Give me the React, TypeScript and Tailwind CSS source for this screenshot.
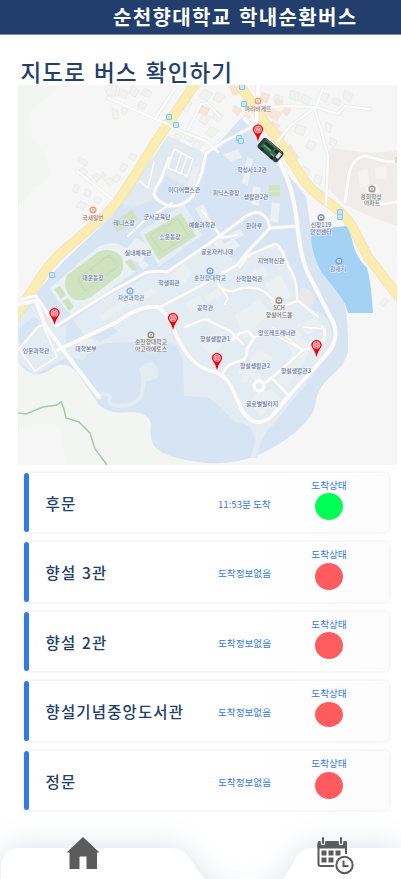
const font = "font-['Noto_Sans_CJK_KR',sans-serif]";

const stops = [
  { name: "후문", info: "11:53분 도착", arrived: true, dot: "mt-[1px] h-[27px]" },
  { name: "향설 3관", info: "도착정보없음", arrived: false, dot: "mt-[2px] h-[27px]" },
  { name: "향설 2관", info: "도착정보없음", arrived: false, dot: "mt-[1px] h-[27px]" },
  { name: "향설기념중앙도서관", info: "도착정보없음", arrived: false, dot: "mt-[2px] h-[25px]" },
  { name: "정문", info: "도착정보없음", arrived: false, dot: "mt-[2px] h-[27px]" },
];

const blocks = [
  "M104 88l5 -3l8 1l-1 10h-8z", "M112 108l6 3l0 8l-5 0z", "M120 88l8 4l-2 7l-8 -4z", "M133 85l6 6l-4 6l-6 -4z",
  "M145 88l7 4l-3 6l-8 -4z", "M140 101l7 4l-3 5l-7 -4z", "M123 107l5 3l-3 5l-4 -3z",
  "M79 157l9 5l-2 4l-9 -5z", "M78 171l5 -3l5 4l-4 6z", "M92 176l5 -3l5 4l-5 5z",
  "M102 172l5 3l-4 4z", "M104 180l6 -3l5 4l-5 6z", "M75 184l5 2l-3 7l-5 -2z", "M86 189l5 2l-2 6l-5 -2z", "M96 196l6 3l-3 5l-6 -3z",
  "M123 163l5 3l-4 6l-5 -3z", "M116 174l5 3l-4 6l-5 -3z", "M131 153l6 3l-3 5l-6 -3z", "M80 201l7 3l-4 5l-7 -2z",
  "M187 132l8 4l-4 7l-7 -5z", "M196 140l7 4l-4 7l-7 -5z", "M176 133l6 3l-3 5l-5 -3z", "M180 108l6 -9l6 4l-5 9z",
  "M205 89l8 5l-6 7l-8 -5z", "M217 92l8 4l-5 7l-7 -4z", "M203 113l8 4l-5 8l-7 -4z", "M217 111l6 4l-5 7l-6 -4z",
  "M211 126l8 5l-7 7l-7 -5z", "M291 90l9 3l-2 8l-9 -3z", "M275 94l8 3l-2 7l-8 -3z", "M303 94l8 4l-3 7l-8 -4z",
  "M297 124l9 4l-3 8l-9 -4z", "M322 92l7 3l-3 7l-6 -3z", "M334 97l7 4l-2 5l-7 -3z", "M345 90l8 4l-3 8l-7 -4z",
  "M303 166l7 4l-3 8l-7 -5z", "M309 140l7 3l-3 8l-7 -4z", "M316 174l6 3l-2 8l-6 -3z", "M326 122l6 3l-2 8l-5 -3z",
  "M331 137l6 4l-3 7l-5 -4z", "M317 188l6 3l-3 6l-6 -3z", "M380 303l5 -5l4 3l-6 6z",
];

const shops = [
  "M229 86l8 -1l3 8l-7 3z", "M262 92l8 3l-3 8l-7 -3z", "M269 107l13 6l-5 8l-11 -6z",
  "M272 121l8 4l-4 8l-8 -5z", "M279 130l7 4l-4 7l-7 -5z", "M290 144l9 14l-7 5l-9 -15z", "M276 98l7 3l-2 7l-6 -4z",
  "M235 105l7 5l-4 6l-6 -5z", "M202 105l8 4l-4 7l-8 -4z", "M285 106l6 3l-4 7l-5 -4z", "M246 112l5 4l-3 4l-5 -3z",
];

const buildings = [
  "M186 190l7 -22l6 -2l-5 27z", "M222 155l16 -6l4 9l-10 4z", "M247 157l6 2l-5 26l-6 -2z", "M253 186l8 2l-2 18l-8 -2z",
  "M272 202l8 2l-2 19l-8 -2z", "M126 249l10 -11l14 8l-9 18l-12 -6z",
  "M170 276l14 -12l8 8l-10 14l-9 -5z", "M138 264l6 -3l5 4l-6 5z",
  "M195 208l8 -4l6 12l-6 6z", "M100 316l22 -16l4 6l-22 16z", "M127 302l26 -14l3 5l-26 14z", "M235 315l24 -17l11 15l-26 27z",
  "M247 275l16 -9l5 9l-16 9z", "M265 284l15 -10l11 22l-18 13z", "M283 339l14 -9l9 12l-12 12z", "M200 344l20 -14l10 10l-20 15z",
  "M298 326l16 -9l9 7l-15 11z", "M237 370l9 -4l9 -14l5 -1l13 6l-3 5l-8 -2l-7 12l8 5l-4 5l-10 -6l-3 8l-6 -2l5 -10l-6 3z",
  "M285 365l8 -13l6 2l4 -12l7 2l-3 13l-20 30l-9 -5z", "M252 399l9 -10l6 3l5 -4l8 11l-4 12l-7 -3l-8 8l-7 -8z",
  "M221 246l12 -8l7 8l-14 9z", "M211 240l9 -3l7 12l-8 4z", "M228 234l12 -5l4 6l-12 6z",
  "M142 337l8 -5l9 9l-8 8z", "M76 342l14 -7l6 11l-14 7z", "M204 297l16 -10l4 6l-16 10z", "M185 304l14 -9l6 9l-14 9z",
];

const majorRoads = [
  "M12 321L38 282Q47 267 60 254L96 223Q105 216 112 208Q119 200 128 186L155 143L199 78",
  "M236 78L241 87L266 124L280 143L303 179Q313 193 333 206Q349 217 357 236L368 257L402 301",
];

const campusRoads = [
  { d: "M245 119L266 140Q284 166 291 190Q296 209 298 232Q302 265 312 281L333 322Q340 339 327 354L287 398L272 416Q256 430 243 412L233 390Q225 373 211 371Q191 366 177 337Q168 312 157 307Q140 305 117 322L58 350", w: 4 },
  { d: "M256 130L258 86", w: 4 },
  { d: "M250 128L225 141L206 153L202 172L193 196Q182 208 168 206L158 200Q151 195 157 186L161 179L169 158", w: 3 },
  { d: "M21 299L36 296L56 326L105 295L145 273Q155 270 167 272L210 243L240 221Q259 204 268 221L270 228L298 226", w: 3 },
  { d: "M270 228L250 249L237 265L202 285L160 307", w: 3 },
  { d: "M240 267L247 256L275 244Q281 244 288 266Q298 279 297 300L318 317", w: 2.5 },
  { d: "M218 284Q226 294 236 290Q252 284 265 292Q275 302 284 306L297 301", w: 2.5 },
  { d: "M218 284L228 298L225 304", w: 2 },
  { d: "M18 304L36 301L45 325L66 354L99 397", w: 4 },
  { d: "M38 327L19 349L35 371L57 357L43 325Z", w: 2 },
  { d: "M202 210L222 238L237 235", w: 2.5 },
  { d: "M223 373Q228 362 241 361Q248 358 247 349L254 338L248 331L240 333L232 340", w: 3 },
  { d: "M185 327L205 319L230 331L243 344", w: 2.5 },
  { d: "M254 337L272 333L302 350M273 327L303 350M303 327L325 329", w: 2 },
  { d: "M265 383L282 369L303 350L319 345Q329 338 322 326", w: 3 },
  { d: "M273 379L288 395", w: 3 },
  { d: "M164 122L180 131L206 141L218 152", w: 2.5 },
  { d: "M108 98L162 122M156 117L176 87", w: 2.5 },
  { d: "M77 171L112 199", w: 2.5 },
  { d: "M188 130L201 104L207 103L220 117", w: 2 },
  { d: "M258 110L282 106L316 107L323 88M316 107L338 114L345 106L370 109M316 107L290 126L278 141", w: 2.5 },
  { d: "M314 107L321 130L328 156L326 205", w: 2.5 },
  { d: "M345 202L349 174Q353 157 366 156L384 161L397 162M375 205L397 202", w: 3 },
  { d: "M140 181L148 188L152 171L154 162", w: 1.5 },
  { d: "M174 149L193 159L187 176L168 168ZM181 154L176 170M187 157L181 173", w: 1.5 },
  { d: "M128 236L143 222L172 203", w: 2 },
];

const labels = [
  [184, 192, "미디어랩스관"], [252, 172, "학성사1,2관"], [226, 195, "피닉스광장"], [256, 199, "생활관2관"],
  [157, 218.5, "군사교육단"], [124, 225, "테니스장"], [170, 239, "소운동장"], [202, 227, "예술과학관"],
  [138, 255, "실내체육관"], [93, 280, "대운동장"], [169, 285, "학생회관"], [254, 228, "한마루"],
  [217, 253.5, "글로자커나데"], [271, 263, "지역혁신관"], [249, 281, "산학협력관"], [205, 310, "공학관"],
  [36, 352.5, "인문과학관"], [86, 351, "대학본부"], [215, 341, "향설생활관1"], [277, 334.5, "앙뜨레프레너관"],
  [255, 368, "향설생활관2"], [296, 373, "향설생활관3"], [262, 406, "글로벌빌리지"],
] as const;

const pins = [[258, 133], [54.500, 316.500], [173, 321.500], [217, 361.500], [316.500, 348.500]];
const busStops = [[169, 117], [176, 125], [242, 87], [244, 104], [239, 138], [241, 141], [52, 275], [340, 212], [340, 217]];

function Poi({ x, y, color }: { x: number; y: number; color: string }) {
  return (
    <g>
      <circle cx={x} cy={y} r="3.500" fill={color} />
      <path d={`M${x - 1.5} ${y + 1}v-2.2h3v2.2z`} fill="none" stroke="#fff" strokeWidth=".9" />
    </g>
  );
}

function CampusMap() {
  return (
    <svg viewBox="18 85 379 380" className="block h-[380px] w-[379px] shrink-0 bg-[#f6f6f6]">
      <path d="M18 85h41q-6 14-22 18q-15 14-4 36q15 17 17 34q-3 11-17 15q-2 9-15 17z" fill="#f2f5f2" />
      <path d="M18 362Q33 380 49 368Q67 361 79 374L96 405Q107 414 140 412Q149 418 152 441Q164 465 240 465H68Q62 448 60 428Q46 418 18 430Z" fill="#f3f5f3" />
      <path d="M330 148L372 153L397 151V226L369 216L345 205L328 188Z" fill="#f0eceb" />
      <path d="M18 321L42 286L65 260L112 216L168 136L208 155L242 117L264 146L306 196L311 232Q313 252 337 291Q349 300 348 352Q345 365 330 377Q316 390 315 406Q311 423 279 444Q245 466 207 463Q166 459 155 447Q149 440 151 423Q147 412 131 412Q109 415 99 405L78 374Q64 358 50 370Q31 382 18 361Z" fill="#d7e4f3" />
      <path d="M18 321L36 300L61 328L105 298L150 274L167 273L210 244L238 262L248 253L279 245L292 269L298 301L325 316Q341 343 325 360L274 424Q260 436 257 458H250Q257 443 253 432Q247 421 234 422Q220 405 207 397L184 396L183 360L177 345L158 341L130 342L107 343Q90 347 83 360L66 358L34 375L18 361Z" fill="#e3ecf3" />
      <path d="M67 312L88 340L66 347ZM18 330L34 316L40 322L20 345ZM92 335L108 324L118 332L99 342Z" fill="#d7e4f3" />
      <path d="M139 369Q144 361 152 362Q160 367 157 378L146 382Q141 377 139 369Z" fill="#e3ecf3" />
      <path d="M143 374Q146 402 128 405Q111 408 109 401Q113 393 100 394" fill="none" stroke="#e3ecf3" strokeWidth="4" />
      <path d="M168 136L208 155L205 160L198 178L188 188L166 176L151 201L132 207L122 203Z" fill="#e2eaf1" />
      <path d="M50 288L98 247Q114 239 126 248L135 272L72 315Q58 303 50 288Z" fill="#eaf1f5" />
      <path d="M139 232L184 204L202 235L159 267Z" fill="#e5edf4" />
      <path d="M300 289Q306 285 312 293Q317 304 309 307L299 300Z" fill="#ebe9e8" />
      <g fill="#f2f2f1" stroke="#e9e9e9" strokeWidth=".8">{blocks.map((d) => <path key={d} d={d} />)}</g>
      <g fill="#f8e5d8" stroke="#f1dccf" strokeWidth=".4">{shops.map((d) => <path key={d} d={d} />)}</g>
      <g fill="#ebf0f2">{buildings.map((d) => <path key={d} d={d} />)}</g>
      <g fill="#f6f3f2"><path d="M358 172l9 -3l3 14l-10 5z" /><path d="M375 168l11 -2l1 12l-11 1z" /><path d="M365 187l12 -3l3 9l-12 3z" /></g>
      {majorRoads.map((d) => <path key={d} d={d} fill="none" stroke="#eedfa9" strokeWidth="10" />)}
      {majorRoads.map((d) => <path key={d} d={d} fill="none" stroke="#fbecb2" strokeWidth="9" />)}
      <g fill="none" stroke="#e5e7e8" strokeLinecap="round" strokeLinejoin="round">
        {campusRoads.map(({ d, w }) => <path key={d} d={d} strokeWidth={w + 1} />)}
      </g>
      <g fill="none" stroke="#fbfbfb" strokeLinecap="round" strokeLinejoin="round">
        {campusRoads.map(({ d, w }) => <path key={d} d={d} strokeWidth={w} />)}
      </g>
      <circle cx="259" cy="386" r="5" fill="#e3ecf3" stroke="#fff" strokeWidth="3" />
      <path d="M311 235L312 230L346 226Q350 230 353 244Q357 259 367 268Q371 282 373 313H348Q345 302 338 293L322 273Q311 254 311 235Z" fill="#a4d2f4" />
      <path d="M67 275L98 252Q111 246 121 256Q126 266 120 275L91 297Q81 303 73 299Q61 289 67 275Z" fill="#cfe3c1" />
      <path d="M78 278L109 255L117 267L85 291ZM91 269L98 280M102 259Q113 253 118 264" fill="none" stroke="#c1d8b4" strokeWidth=".8" />
      <path d="M144 235L181 213L196 236L159 260Z" fill="#cfe3c1" />
      <path d="M150 235L178 219L189 236L162 252ZM163 227L174 246" fill="none" stroke="#c1d8b4" strokeWidth=".8" />
      <g fill="#cfe3c1">
        <path d="M112 223l20 -13l6 9l-21 13z" /><path d="M125 262l5 -3l7 10l-4 2z" />
        <path d="M54 289l6 -3l6 9l-5 4z" /><path d="M62 301l6 -3l6 9l-5 4z" />
        <path d="M269 185h11v12h-11z" /><path d="M395 157h2v6h-2z" />
      </g>
      <path d="M269 191h11" stroke="#e5efdf" strokeWidth=".7" />
      <path d="M18 413L26 414L43 407L57 405L61 402L64 409L66 418L79 422L90 433L95 449L107 465" fill="none" stroke="#a4cba6" strokeWidth="1.500" />
      <g className={`${font} font-medium`} fontSize="5.800" textAnchor="middle" fill="#65719d" stroke="#f5f8fc" strokeWidth="1" paintOrder="stroke">
        {labels.map(([x, y, t]) => <text key={t} x={x} y={y}>{t}</text>)}
        <text x="131" y="300" fill="#6689b2">자연과학관</text>
        <text x="210" y="280" fill="#6689b2">순천향대학교</text>
        <text x="338" y="271" fill="#6287bd">원새지</text>
        <g fill="#667195"><text x="321" y="227">신창119</text><text x="321" y="233.500">안전센터</text></g>
        <g fill="#827a76"><text x="371" y="198.500">경희학성</text><text x="372" y="205">아파트</text></g>
        <g fill="#7b6f66"><text x="279" y="310">SCH</text><text x="279" y="317">향설어드홀</text></g>
        <g fill="#7b6f66"><text x="151" y="344">순천향대학교</text><text x="151" y="351">아고라에토스</text></g>
        <text x="258" y="110.500" fill="#a17967">파리바게뜨</text><text x="93" y="219.500" fill="#b27764">국새일번</text>
      </g>
      <Poi x={258} y={101} color="#eda382" /><Poi x={93} y={210} color="#e99b7b" />
      <Poi x={130} y={291} color="#88a9e4" /><Poi x={210} y={271} color="#7b9fdf" /><Poi x={339} y={261} color="#7b9fdf" />
      <Poi x={321} y={217.5} color="#7f91b4" /><Poi x={372} y={189} color="#979595" />
      <Poi x={279} y={300.5} color="#958b81" /><Poi x={151} y={335} color="#958b81" />
      {busStops.map(([x, y]) => (
        <g key={`${x}-${y}`}>
          <rect x={x - 3} y={y - 3} width="6" height="6" rx="1.500" fill="#80c5ef" />
          <path d={`M${x - 1.5} ${y - 1.5}h3v3h-3z`} fill="#c5e5fb" stroke="#eefaff" strokeWidth=".6" />
        </g>
      ))}
      {pins.map(([x, y]) => (
        <g key={`${x}-${y}`} transform={`translate(${x} ${y})`}>
          <path d="M0 8.500Q-1.300 3-4 -.5A5 5 0 1 1 4 -.5Q1.300 3 0 8.500Z" fill="#f4000b" />
          <circle cy="-3.500" r="3.500" fill="#f53c47" stroke="#fff" strokeWidth=".7" />
          <path d="M-1.700 -2v-3h3.400v3zM-1.700 -3.500h3.400" fill="none" stroke="#ffdada" strokeWidth=".8" />
        </g>
      ))}
      <g transform="translate(270.500 150) rotate(40)">
        <rect x="-13" y="-6.500" width="26" height="13" rx="3" fill="#343d42" />
        <path d="M-10 -4.500H7V3.500H-10z" fill="#286e45" />
        <path d="M-9 -3.500H2V-1H-9zM4 -4h4v3h-4z" fill="#17282d" />
        <path d="M-8 .5H1M2 2.500h5" stroke="#61ad73" strokeWidth="1.300" />
        <path d="M8 -4h3.500v6h-3.500z" fill="#dee6e5" />
        <circle cx="-7" cy="5" r="1.600" fill="#18191e" /><circle cx="6" cy="5" r="1.600" fill="#18191e" />
        <path d="M-11 -5.500H10" stroke="#8b949a" strokeWidth=".7" />
      </g>
    </svg>
  );
}

function HomeIcon() {
  return (
    <svg viewBox="0 0 34 33" className="h-[33px] w-[34px]">
      <path d="M17 0L33.500 15.500H31V32H20.500V19.500H13.500V32H3.500V15.500H.5Z" fill="#5b5b5b" />
    </svg>
  );
}

function ScheduleIcon() {
  return (
    <svg viewBox="0 0 37 38" className="h-[38px] w-[37px]">
      <path d="M1.500 5.500H29V17" fill="none" stroke="#5b5b5b" strokeWidth="2" />
      <path d="M.5 6Q.5 4 2.500 4H28Q30 4 30 6V11.500H.5Z" fill="#5b5b5b" />
      <path d="M1.500 7V27Q1.500 29 3.500 29H17" fill="none" stroke="#5b5b5b" strokeWidth="2" />
      <path d="M6 0V6M24 0V6" stroke="#fff" strokeWidth="4.500" strokeLinecap="round" />
      <path d="M6 1.200V6M24 1.200V6" stroke="#5b5b5b" strokeWidth="2.200" strokeLinecap="round" />
      <g fill="#5b5b5b">
        <rect x="4.500" y="13.500" width="5" height="5" /><rect x="11.500" y="13.500" width="5" height="5" /><rect x="18.500" y="13.500" width="5" height="5" />
        <rect x="4.500" y="20.500" width="5" height="5" /><rect x="11.500" y="20.500" width="5" height="5" />
      </g>
      <circle cx="27.500" cy="28" r="10.300" fill="#fff" />
      <circle cx="27.500" cy="28" r="8.200" fill="#fff" stroke="#5b5b5b" strokeWidth="2" />
      <path d="M26.500 23.500V29H31.500" fill="none" stroke="#5b5b5b" strokeWidth="2" />
    </svg>
  );
}

export default function App() {
  return (
    <div className={`${font} flex h-[879px] w-[401px] flex-col overflow-hidden bg-white`}>
      <header className="flex h-[34.500px] shrink-0 items-center border-b border-[#8290ab] bg-[#223e6c] pl-[113px]">
        <h1 className="pt-[1px] text-[20px] leading-[34px] font-bold tracking-[1.350px] whitespace-nowrap text-white [word-spacing:1.500px]">순천향대학교 학내순환버스</h1>
      </header>
      <main className="flex shrink-0 flex-col">
        <h2 className="mt-[20px] ml-[20.500px] h-[30.500px] text-[22.500px] leading-[32px] font-medium tracking-[1.100px] whitespace-nowrap text-[#223e6c] [word-spacing:2px]">지도로 버스 확인하기</h2>
        <div className="pl-[18px]"><CampusMap /></div>
        <ul className="mt-2 ml-6 flex w-[365px] flex-col gap-[10px]">
          {stops.map((stop) => (
            <li key={stop.name} className="flex h-[59.400px] rounded-[5px] bg-gradient-to-r from-white from-60% to-[#fcfcfd] shadow-[0_0_4px_rgba(0,0,0,0.1)]">
              <span className="w-[4.500px] rounded-full bg-[#3579e3]" />
              <span className="ml-[17px] flex w-[172.500px] items-center pt-[2px] text-[15.500px] font-medium tracking-[1.150px] whitespace-nowrap text-[#233e69] [word-spacing:1px]">{stop.name}</span>
              <span className="flex w-[83.500px] items-center pt-[3px] text-[9.600px] whitespace-nowrap text-[#3579e3]">{stop.info}</span>
              <span className="flex w-[55px] flex-col items-center pt-[5px] text-[9.600px] leading-[14px] whitespace-nowrap text-[#3579e3]">
                도착상태
                <i className={`w-7 rounded-[50%] ${stop.dot} ${stop.arrived ? "bg-[#00ff55]" : "bg-[#ff5c5f]"}`} />
              </span>
            </li>
          ))}
        </ul>
      </main>
      <nav className="relative mt-[27px] flex h-[42px] w-full shrink-0">
        <svg viewBox="0 0 401 42" className="absolute inset-0 h-[42px] w-[401px] overflow-visible drop-shadow-[0_-3px_13px_rgba(80,105,140,0.17)]">
          <path d="M1 80V32Q1 11 21 11H170C192 11 190 29 206 42Q222 58 244 58Q268 58 282 42C296 29 293 11 313 11H401V80Z" fill="#fff" />
        </svg>
        <button className="relative ml-[65.500px] h-[33px] w-[34px]" aria-label="홈"><HomeIcon /></button>
        <button className="relative ml-[217px] h-[38px] w-[37px]" aria-label="시간표"><ScheduleIcon /></button>
      </nav>
    </div>
  );
}
